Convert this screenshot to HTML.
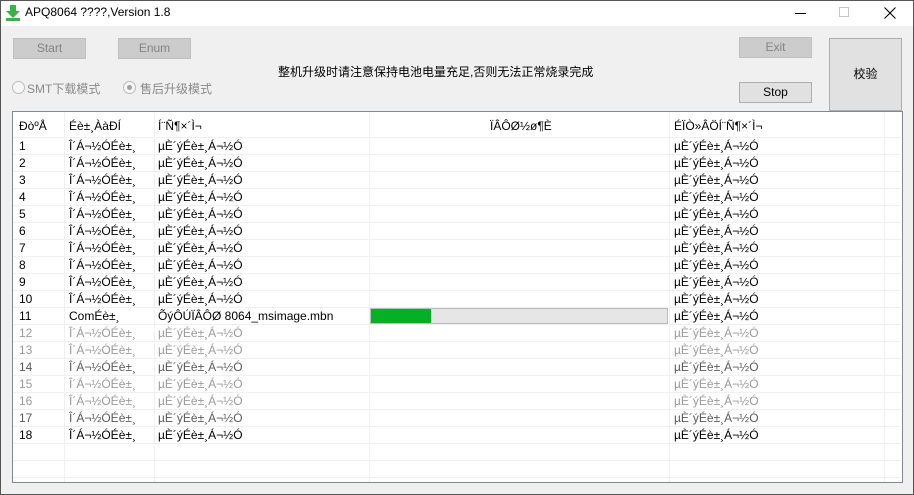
<!DOCTYPE html><html><head><meta charset="utf-8"><style>
*{margin:0;padding:0;box-sizing:border-box}
body{width:914px;height:495px;overflow:hidden;background:#f0f0f0;font-family:"Liberation Sans","Noto Sans CJK SC",sans-serif;font-size:11px;color:#000;position:relative}
.win{position:absolute;left:0;top:0;width:914px;height:495px}
.bd{position:absolute;left:0;top:0;width:914px;height:495px;border:1px solid #555;pointer-events:none}
.title{position:absolute;left:0;top:0;width:914px;height:26px;background:#fff}
.a{position:absolute;white-space:nowrap}
.btn{position:absolute;border:1px solid #adadad;background:#e1e1e1;text-align:center;font-size:12px}
.dis{background:#ccc;border-color:#bfbfbf;color:#838383}
.tbl{position:absolute;left:12px;top:111px;width:891px;height:372px;border:1px solid #828790;background:#fff;overflow:hidden;font-size:12px}
.hl{position:absolute;left:0;width:888px;height:1px;background:#f0f0f0}
.vl{position:absolute;top:0;width:1px;height:370px;background:#f0f0f0}
.r{position:absolute;left:0;height:17px;width:888px}
.r span{position:absolute;top:1px}
.g{color:#9a9a9a}.m{color:#5a5a5a}
</style></head><body><div class="win">
<div class="title">
<svg class="a" style="left:6px;top:5px" width="14" height="16" viewBox="0 0 14 16"><path d="M4 0h6v6h4l-7 7-7-7h4z" fill="#3cb34a"/><rect x="0" y="13" width="14" height="3" fill="#3cb34a"/></svg>
<div class="a" style="left:25px;top:5px;font-size:12px">APQ8064 ????,Version 1.8</div>
<div class="a" style="left:795px;top:13px;width:11px;height:1px;background:#000"></div>
<div class="a" style="left:839px;top:7px;width:10px;height:10px;border:1px solid #c8c8c8"></div>
<svg class="a" style="left:884px;top:7px" width="12" height="12"><path d="M0.5 0.5L11.5 11.5M11.5 0.5L0.5 11.5" stroke="#000" stroke-width="1.1"/></svg>
</div>
<div class="btn dis" style="left:13px;top:38px;width:73px;height:21px;line-height:19px">Start</div>
<div class="btn dis" style="left:118px;top:38px;width:73px;height:21px;line-height:19px">Enum</div>
<div class="btn dis" style="left:739px;top:37px;width:73px;height:21px;line-height:19px">Exit</div>
<div class="btn" style="left:739px;top:82px;width:73px;height:21px;line-height:19px">Stop</div>
<div class="btn" style="left:829px;top:38px;width:73px;height:73px;line-height:71px;font-size:12px">校验</div>
<div class="a" style="left:278px;top:63px;font-size:12px">整机升级时请注意保持电池电量充足,否则无法正常烧录完成</div>
<div class="a" style="left:12px;top:81px;width:13px;height:13px;border:1px solid #bcbcbc;border-radius:50%;background:#f6f6f6"></div>
<div class="a" style="left:27px;top:80px;font-size:12px;color:#8a8a8a">SMT下载模式</div>
<div class="a" style="left:123px;top:81px;width:13px;height:13px;border:1px solid #bcbcbc;border-radius:50%;background:#f6f6f6"><div style="position:absolute;left:3px;top:3px;width:5px;height:5px;border-radius:50%;background:#a0a0a0"></div></div>
<div class="a" style="left:140px;top:80px;font-size:12px;color:#8a8a8a">售后升级模式</div>
<div class="tbl">
<div class="vl" style="left:51px"></div><div class="vl" style="left:141px"></div><div class="vl" style="left:356px"></div><div class="vl" style="left:656px"></div><div class="vl" style="left:871px"></div>
<div class="r" style="top:0;height:25px"><span style="left:6px;top:7px">ÐòºÅ</span><span style="left:56px;top:7px">Éè±¸ÀàÐÍ</span><span style="left:145px;top:7px">Í¨Ñ¶×´Ì¬</span><span style="left:477px;top:7px">ÏÂÔØ½ø¶È</span><span style="left:661px;top:7px">ÉÏÒ»ÂÖÍ¨Ñ¶×´Ì¬</span></div>
<div id="rows"></div>
</div>
</div>
<div class="bd"></div>
<script>
var h='',cls={12:'g',13:'g',14:'m',15:'g',16:'g',17:'m'};
for(var i=0;i<21;i++){var t=25+i*17;h+='<div class="hl" style="top:'+(t)+'px"></div>';
var n=i+1;if(n<=18){var c=cls[n]||'';var a='Î´Á¬½ÓÉè±¸',b='µÈ´ýÉè±¸Á¬½Ó';if(n==11){a='ComÉè±¸';b='ÕýÔÚÏÂÔØ 8064_msimage.mbn';}
h+='<div class="r '+c+'" style="top:'+(t+1)+'px"><span style="left:6px">'+n+'</span><span style="left:56px">'+a+'</span><span style="left:145px">'+b+'</span><span style="left:661px" class="'+(n==11?'':c)+'">µÈ´ýÉè±¸Á¬½Ó</span>'+(n==11?'<div style="position:absolute;left:357px;top:0px;width:298px;height:16px;background:#e6e6e6;border:1px solid #bcbcbc"><div style="width:60px;height:14px;background:#06b025"></div></div>':'')+'</div>';}}
document.getElementById('rows').innerHTML=h;
</script>
</body></html>
